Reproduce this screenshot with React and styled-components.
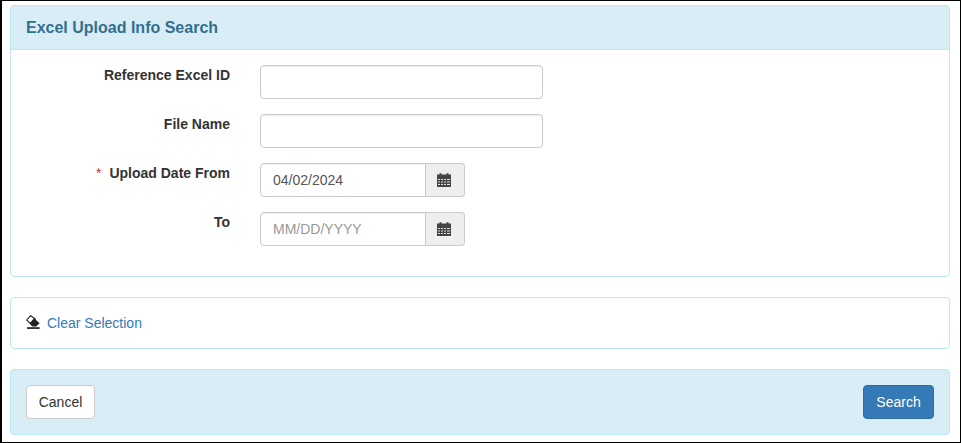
import React from 'react';
import styled, { createGlobalStyle } from 'styled-components';

const GlobalStyle = createGlobalStyle`
  html, body {
    margin: 0;
    padding: 0;
    background: #fff;
  }
  body {
    font-family: "Liberation Sans", Arial, sans-serif;
    font-size: 14px;
    line-height: 20px;
    color: #333;
  }
  * {
    box-sizing: border-box;
  }
`;

const Page = styled.div`
  width: 961px;
  height: 443px;
  border-style: solid;
  border-color: #000;
  border-width: 1px 1px 1px 2px;
  padding: 4px 10px 0 8px;
  overflow: hidden;
  display: flex;
  flex-direction: column;
  gap: 20px;
`;

const Panel = styled.section`
  background: #fff;
  border: 1px solid #bce8f1;
  border-radius: 4px;
`;

const PanelHeading = styled.div`
  background: #d9edf7;
  border-bottom: 1px solid #bce8f1;
  border-radius: 3px 3px 0 0;
  padding: 10px 15px;
  height: 44px;
`;

const Title = styled.h3`
  margin: 0;
  font-size: 16px;
  line-height: 24px;
  font-weight: 700;
  color: #31708f;
`;

const PanelBody = styled.div`
  padding: 15px;
`;

const Row = styled.div`
  display: grid;
  grid-template-columns: 204px 1fr;
  column-gap: 30px;
  margin-bottom: 15px;
`;

const Label = styled.label`
  text-align: right;
  font-weight: 700;
  color: #333;
`;

const Required = styled.span`
  color: #a94442;
  font-weight: 400;
  margin-right: 8px;
`;

const TextInput = styled.input`
  display: block;
  width: ${(p) => p.$width || '283px'};
  height: 34px;
  padding: 6px 12px;
  font: inherit;
  color: #555;
  background: #fff;
  border: 1px solid #ccc;
  border-radius: ${(p) => (p.$joined ? '4px 0 0 4px' : '4px')};
  box-shadow: inset 0 1px 1px rgba(0, 0, 0, 0.075);
  outline: none;

  &::placeholder {
    color: #999;
    opacity: 1;
  }
`;

const DateGroup = styled.div`
  display: flex;
  width: 205px;
`;

const Addon = styled.span`
  width: 39px;
  height: 34px;
  padding-right: 3px;
  display: flex;
  align-items: center;
  justify-content: center;
  background: #eee;
  border: 1px solid #ccc;
  border-left: 0;
  border-radius: 0 4px 4px 0;
`;

const ClearLink = styled.a`
  display: flex;
  align-items: center;
  gap: 7px;
  color: #337ab7;
  text-decoration: none;
`;

const EraserSvg = styled.svg`
  margin-bottom: 2px;
`;

const Footer = styled(Panel)`
  background: #d9edf7;
  padding: 15px;
  display: flex;
  justify-content: space-between;
`;

const Button = styled.button`
  width: ${(p) => p.$width};
  height: 34px;
  padding: 6px 0;
  font: inherit;
  border-radius: 4px;
  border: 1px solid ${(p) => (p.$primary ? '#2e6da4' : '#ccc')};
  background: ${(p) => (p.$primary ? '#337ab7' : '#fff')};
  color: ${(p) => (p.$primary ? '#fff' : '#333')};
`;

const CalendarIcon = () => (
  <svg width="14" height="14" viewBox="0 0 14 14" aria-hidden="true">
    <path fill="#444" d="M0 1.5h2.5V.3h2v1.2h5V.3h2v1.2H14V14H0z" />
    <path
      fill="#ddd"
      d="M1 6h2v1H1zM4 6h2v1H4zM7 6h2v1H7zM10 6h3v1h-3zM1 8.5h2v1H1zM4 8.5h2v1H4zM7 8.5h2v1H7zM10 8.5h3v1h-3zM1 11h2v1H1zM4 11h2v1H4zM7 11h2v1H7zM10 11h3v1h-3z"
    />
  </svg>
);

const EraserIcon = () => (
  <EraserSvg width="14" height="14" viewBox="0 0 14 14" aria-hidden="true">
    <path fill="#fff" stroke="#222" strokeWidth="1.1" d="M4.7 .7 .7 5l5.6 5.6 2-1.4 1-5.2z" />
    <path fill="#222" d="M8 3.2 13.6 8.3 10 11.4H6.6L3.6 8.2z" />
    <rect x="1" y="12.2" width="12.6" height="1.7" fill="#222" />
  </EraserSvg>
);

const DateField = ({ value, placeholder }) => (
  <DateGroup>
    <TextInput $joined $width="166px" defaultValue={value} placeholder={placeholder} />
    <Addon>
      <CalendarIcon />
    </Addon>
  </DateGroup>
);

const App = () => (
  <>
    <GlobalStyle />
    <Page>
      <Panel>
        <PanelHeading>
          <Title>Excel Upload Info Search</Title>
        </PanelHeading>
        <PanelBody>
          <Row>
            <Label>Reference Excel ID</Label>
            <TextInput />
          </Row>
          <Row>
            <Label>File Name</Label>
            <TextInput />
          </Row>
          <Row>
            <Label>
              <Required>*</Required>Upload Date From
            </Label>
            <DateField value="04/02/2024" />
          </Row>
          <Row>
            <Label>To</Label>
            <DateField placeholder="MM/DD/YYYY" />
          </Row>
        </PanelBody>
      </Panel>
      <Panel>
        <PanelBody>
          <ClearLink href="#">
            <EraserIcon />
            Clear Selection
          </ClearLink>
        </PanelBody>
      </Panel>
      <Footer>
        <Button $width="69px">Cancel</Button>
        <Button $primary $width="71px">Search</Button>
      </Footer>
    </Page>
  </>
);

export default App;
